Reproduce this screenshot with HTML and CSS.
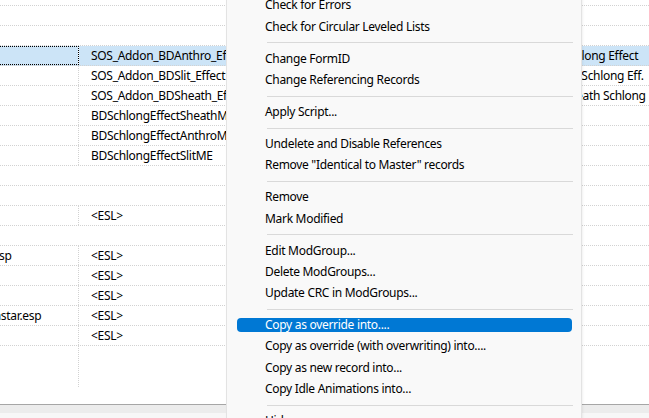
FILE: index.html
```html
<!DOCTYPE html>
<html>
<head>
<meta charset="utf-8">
<link rel="stylesheet" href="styles.css">
</head>
<body>
<div class="app">
  <div class="list">
    <div class="rows">
      <div class="row grp"><div class="c1"></div><div class="c2"></div><div class="c3"></div></div>
      <div class="row grp"><div class="c1"></div><div class="c2"></div><div class="c3"></div></div>
      <div class="row grp"><div class="c1"></div><div class="c2"></div><div class="c3"></div></div>
      <div class="row sel"><div class="c1 focus"></div><div class="c2">SOS_Addon_BDAnthro_Effect</div><div class="c3">BD Anthro Schlong Effect</div></div>
      <div class="row"><div class="c1"></div><div class="c2">SOS_Addon_BDSlit_Effect</div><div class="c3">BD Anthro Slit Schlong Eff.</div></div>
      <div class="row"><div class="c1"></div><div class="c2">SOS_Addon_BDSheath_Effect</div><div class="c3">BD Anthro Sheath Schlong Effect</div></div>
      <div class="row"><div class="c1"></div><div class="c2">BDSchlongEffectSheathME</div><div class="c3"></div></div>
      <div class="row"><div class="c1"></div><div class="c2">BDSchlongEffectAnthroME</div><div class="c3"></div></div>
      <div class="row"><div class="c1"></div><div class="c2">BDSchlongEffectSlitME</div><div class="c3"></div></div>
      <div class="row grp"><div class="c1"></div><div class="c2"></div><div class="c3"></div></div>
      <div class="row grp"><div class="c1"></div><div class="c2"></div><div class="c3"></div></div>
      <div class="row"><div class="c1"></div><div class="c2">&lt;ESL&gt;</div><div class="c3"></div></div>
      <div class="row grp"><div class="c1"></div><div class="c2"></div><div class="c3"></div></div>
      <div class="row"><div class="c1">SOS - Bad Dragon Addon.esp</div><div class="c2">&lt;ESL&gt;</div><div class="c3"></div></div>
      <div class="row"><div class="c1"></div><div class="c2">&lt;ESL&gt;</div><div class="c3"></div></div>
      <div class="row"><div class="c1"></div><div class="c2">&lt;ESL&gt;</div><div class="c3"></div></div>
      <div class="row"><div class="c1">Bad Dragon Schlongs - Lunstar.esp</div><div class="c2">&lt;ESL&gt;</div><div class="c3"></div></div>
      <div class="row"><div class="c1"></div><div class="c2">&lt;ESL&gt;</div><div class="c3"></div></div>
      <div class="row filler"><div class="c1"></div><div class="c2"></div><div class="c3"></div></div>
    </div>
  </div>
  <div class="hscroll"></div>

  <div class="menu">
    <div class="item">Check for Errors</div>
    <div class="item">Check for Circular Leveled Lists</div>
    <div class="sep"></div>
    <div class="item">Change FormID</div>
    <div class="item">Change Referencing Records</div>
    <div class="sep"></div>
    <div class="item">Apply Script...</div>
    <div class="sep"></div>
    <div class="item">Undelete and Disable References</div>
    <div class="item">Remove "Identical to Master" records</div>
    <div class="sep"></div>
    <div class="item">Remove</div>
    <div class="item">Mark Modified</div>
    <div class="sep"></div>
    <div class="item">Edit ModGroup...</div>
    <div class="item">Delete ModGroups...</div>
    <div class="item">Update CRC in ModGroups...</div>
    <div class="sep"></div>
    <div class="item hl">Copy as override into....</div>
    <div class="item">Copy as override (with overwriting) into....</div>
    <div class="item">Copy as new record into...</div>
    <div class="item">Copy Idle Animations into...</div>
    <div class="sep"></div>
    <div class="item">Hide</div>
  </div>
</div>
</body>
</html>
```

FILE: styles.css
```css
html, body {
  margin: 0;
  padding: 0;
  background: #ffffff;
  overflow: hidden;
}

.app {
  position: relative;
  width: 649px;
  height: 418px;
  overflow: hidden;
  font-family: "Noto Sans", "Open Sans", sans-serif;
  font-size: 12px;
  letter-spacing: -0.3px;
  color: #000;
  display: flex;
  flex-direction: column;
}

.list {
  height: 404px;
  overflow: hidden;
  background: #fff;
}

.rows {
  margin-top: -14px;
  margin-left: -150px;
  height: 418px;
  display: flex;
  flex-direction: column;
}

.row {
  display: grid;
  grid-template-columns: 229px 419px 300px;
  height: 20px;
  box-sizing: border-box;
  border-bottom: 1px dotted #d2d2d2;
  flex: none;
}

.row > div {
  white-space: nowrap;
  overflow: hidden;
  line-height: 19px;
}

.c1 {
  padding-left: 6px;
  border-right: 1px dotted #d2d2d2;
}

.c2 {
  padding-left: 12px;
}

.c3 {
  padding-left: 6px;
}

.row.grp .c1 {
  border-right-color: transparent;
}

.row.sel {
  background: #cce4f7;
}

.row.sel .c1 {
  outline: 1px dotted #000;
  outline-offset: -1px;
  border-right: 1px solid #fff;
}

.row.filler {
  flex: 1;
  border-bottom: none;
  margin-bottom: 17px;
}

.hscroll {
  height: 14px;
  box-sizing: border-box;
  border-top: 1px solid #a6a6a6;
  background: linear-gradient(#ececec 0 8px, #f7f7f7 8px);
}

.menu {
  position: absolute;
  left: 226px;
  top: -10.2px;
  width: 356px;
  height: 440px;
  box-sizing: border-box;
  padding-top: 4px;
  background: #f9f9f9;
  border: 1px solid #e3e3e3;
  box-shadow: 1px 1px 2px rgba(0,0,0,0.06);
  display: flex;
  flex-direction: column;
}

.item {
  flex: none;
  height: 14px;
  line-height: 14px;
  margin: 3.67px 9px 3.67px 10px;
  padding-left: 28px;
  border-radius: 4px;
  white-space: nowrap;
}

.item.hl {
  background: #0078d4;
  color: #fff;
}

.sep {
  flex: none;
  height: 1px;
  margin: 4.83px 8px 4.84px 40px;
  background: #d9d9d9;
}
```
